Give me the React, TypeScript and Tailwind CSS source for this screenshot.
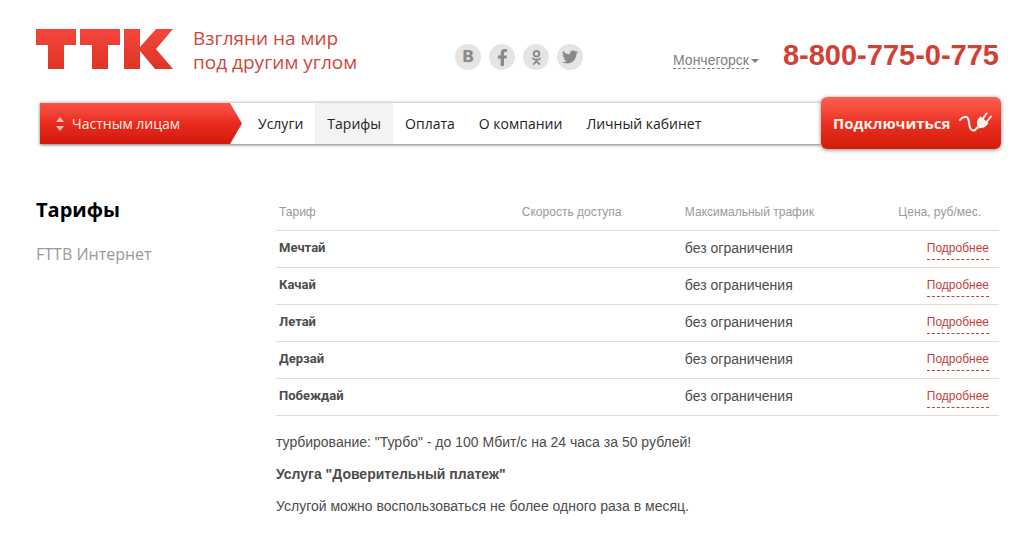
import { FC, ReactNode } from "react";
import { FaFacebookF, FaOdnoklassniki, FaTwitter } from "react-icons/fa";

const navItems = [
  { label: "Услуги", active: false },
  { label: "Тарифы", active: true },
  { label: "Оплата", active: false },
  { label: "О компании", active: false },
  { label: "Личный кабинет", active: false },
];

const tariffs = ["Мечтай", "Качай", "Летай", "Дерзай", "Побеждай"];

const Logo: FC = () => (
  <svg width="137" height="40" viewBox="0 0 137 40" aria-label="ТТК" role="img">
    <defs>
      <linearGradient id="logo" x1="0" y1="0" x2="0" y2="1">
        <stop offset="0" stopColor="#f5453f" />
        <stop offset="1" stopColor="#dd3424" />
      </linearGradient>
    </defs>
    <path
      fill="url(#logo)"
      d="M0 0h40v16H28v24H12V16H0zM44 0h40v16H72v24H56V16H44zM88 0h16v18L120 0h17L120 20l17 20h-18l-15-18v18H88z"
    />
  </svg>
);

const PlugIcon: FC = () => (
  <svg width="34" height="22" viewBox="0 0 34 22" fill="none" stroke="#fff4ec" aria-hidden="true">
    <path
      d="M1 8C3 5 8 3 9.500 7.500C10.500 12 10 18 14 18.500C16 19 17 17.500 18 15.500"
      strokeWidth="2"
      strokeLinecap="round"
    />
    <path
      d="M18 16.500L19 14C17.500 10.500 19 7 21.500 5L29 11C27.500 14 24.500 16 21 15.500z"
      fill="#fff4ec"
      strokeLinejoin="round"
    />
    <path d="M24 6.500L27.500 1.500M28 9.500L32 4.500" strokeWidth="2" strokeLinecap="round" />
  </svg>
);

const Social: FC<{ label: string; children: ReactNode }> = ({ label, children }) => (
  <a
    href="#"
    aria-label={label}
    className="flex h-[26px] w-[26px] items-center justify-center rounded-full bg-[#e4e4e4] text-[#8a8a8a]"
  >
    {children}
  </a>
);

const Header: FC = () => (
  <header className="flex items-start pt-[26px]">
    <a href="#" className="mt-[3px]">
      <Logo />
    </a>
    <p className="ml-5 w-[262px] font-['Open_Sans',sans-serif] text-[19px] leading-6 text-[#d0473c]">
      Взгляни на мир
      <br />
      под другим углом
    </p>
    <div className="mt-[18px] flex gap-2">
      <Social label="ВКонтакте">
        <span className="font-['DejaVu_Sans',sans-serif] text-[16px] leading-none font-bold">B</span>
      </Social>
      <Social label="Facebook">
        <FaFacebookF size={17} />
      </Social>
      <Social label="Одноклассники">
        <FaOdnoklassniki size={15} />
      </Social>
      <Social label="Twitter">
        <FaTwitter size={16} />
      </Social>
    </div>
    <div className="mr-0.5 ml-auto flex items-start gap-6">
      <button className="mt-[26px] flex items-center gap-0.5 text-[14px] leading-4 text-[#808080]">
        <span className="border-b border-dashed border-[#808080]">Мончегорск</span>
        <span className="border-x-4 border-t-4 border-x-transparent border-t-[#808080]" />
      </button>
      <a href="tel:88007750775" className="mt-[11px] text-[29px] leading-9 font-bold text-[#d23f34]">
        8-800-775-0-775
      </a>
    </div>
  </header>
);

const Navigation: FC = () => (
  <div className="mt-[23px] ml-1 flex items-center font-['Open_Sans',sans-serif]">
    <nav className="flex h-[42px] flex-1 items-stretch border-t border-[#d8d8d8] bg-white shadow-[0_1px_3px_#777]">
      <button className="flex w-[202px] items-center gap-2 bg-linear-to-b from-[#fb5347] via-[#e92a1e] to-[#d2190e] pl-4 text-[14px] text-[#fff0e4] [clip-path:polygon(0_0,190px_0,100%_50%,190px_100%,0_100%)]">
        <span className="flex flex-col gap-1">
          <span className="border-x-4 border-b-5 border-x-transparent border-b-[#ffb9ae]" />
          <span className="border-x-4 border-t-5 border-x-transparent border-t-[#ffb9ae]" />
        </span>
        Частным лицам
      </button>
      <div className="ml-1 flex">
        {navItems.map((item) => (
          <a
            key={item.label}
            href="#"
            className={`flex items-center px-3 text-[14px] text-[#222] ${item.active ? "bg-[#f3f3f3]" : ""}`}
          >
            {item.label}
          </a>
        ))}
      </div>
    </nav>
    <button className="flex h-[52px] w-[180px] items-center justify-between rounded-md bg-linear-to-b from-[#fc5f50] via-[#ea3022] via-50% to-[#d31a05] pr-2 pl-3 text-[15px] font-bold text-[#fff4ec] shadow-[0_1px_4px_#888]">
      Подключиться
      <PlugIcon />
    </button>
  </div>
);

const TariffTable: FC = () => (
  <table className="w-full table-fixed border-collapse text-left">
    <thead>
      <tr className="h-[37px] border-b border-[#ead9d5] text-[12px] text-[#999]">
        <th className="w-[34%] pt-0.5 pl-[3px] font-normal">Тариф</th>
        <th className="w-[22%] pt-0.5 font-normal">Скорость доступа</th>
        <th className="w-[25%] pt-0.5 pl-1 font-normal">Максимальный трафик</th>
        <th className="pt-0.5 pr-[18px] text-right font-normal">Цена, руб/мес.</th>
      </tr>
    </thead>
    <tbody>
      {tariffs.map((name) => (
        <tr key={name} className="h-[37px] border-b border-[#ead9d5] text-[14px] text-[#4c4c4c]">
          <th scope="row" className="pb-0.5 pl-[3px] font-['Roboto',sans-serif] text-[13px] font-bold">
            {name}
          </th>
          <td />
          <td className="pb-0.5 pl-1">без ограничения</td>
          <td className="pt-px pr-2.5 text-right">
            <a
              href="#"
              className="inline-block border-b border-dashed border-[#c4403c] pb-[3px] align-middle text-[12px] leading-4 text-[#c4403c]"
            >
              Подробнее
            </a>
          </td>
        </tr>
      ))}
    </tbody>
  </table>
);

const App: FC = () => (
  <div className="bg-white pr-[21px] pb-5 pl-9 font-['Liberation_Sans',Arial,sans-serif]">
    <Header />
    <Navigation />
    <div className="mt-11 flex">
      <aside className="w-60 shrink-0 pt-px font-['Open_Sans',sans-serif]">
        <h1 className="text-[20px] leading-8 font-bold text-black">Тарифы</h1>
        <a href="#" className="mt-4 block text-[16px] leading-6 text-[#999]">
          FTTB Интернет
        </a>
      </aside>
      <main className="min-w-0 flex-1 pr-0.5 text-[14px] leading-5 text-[#4c4c4c]">
        <TariffTable />
        <p className="mt-4">турбирование: "Турбо" - до 100 Мбит/с на 24 часа за 50 рублей!</p>
        <p className="mt-3 font-bold">Услуга "Доверительный платеж"</p>
        <p className="mt-3">Услугой можно воспользоваться не более одного раза в месяц.</p>
      </main>
    </div>
  </div>
);

export default App;
